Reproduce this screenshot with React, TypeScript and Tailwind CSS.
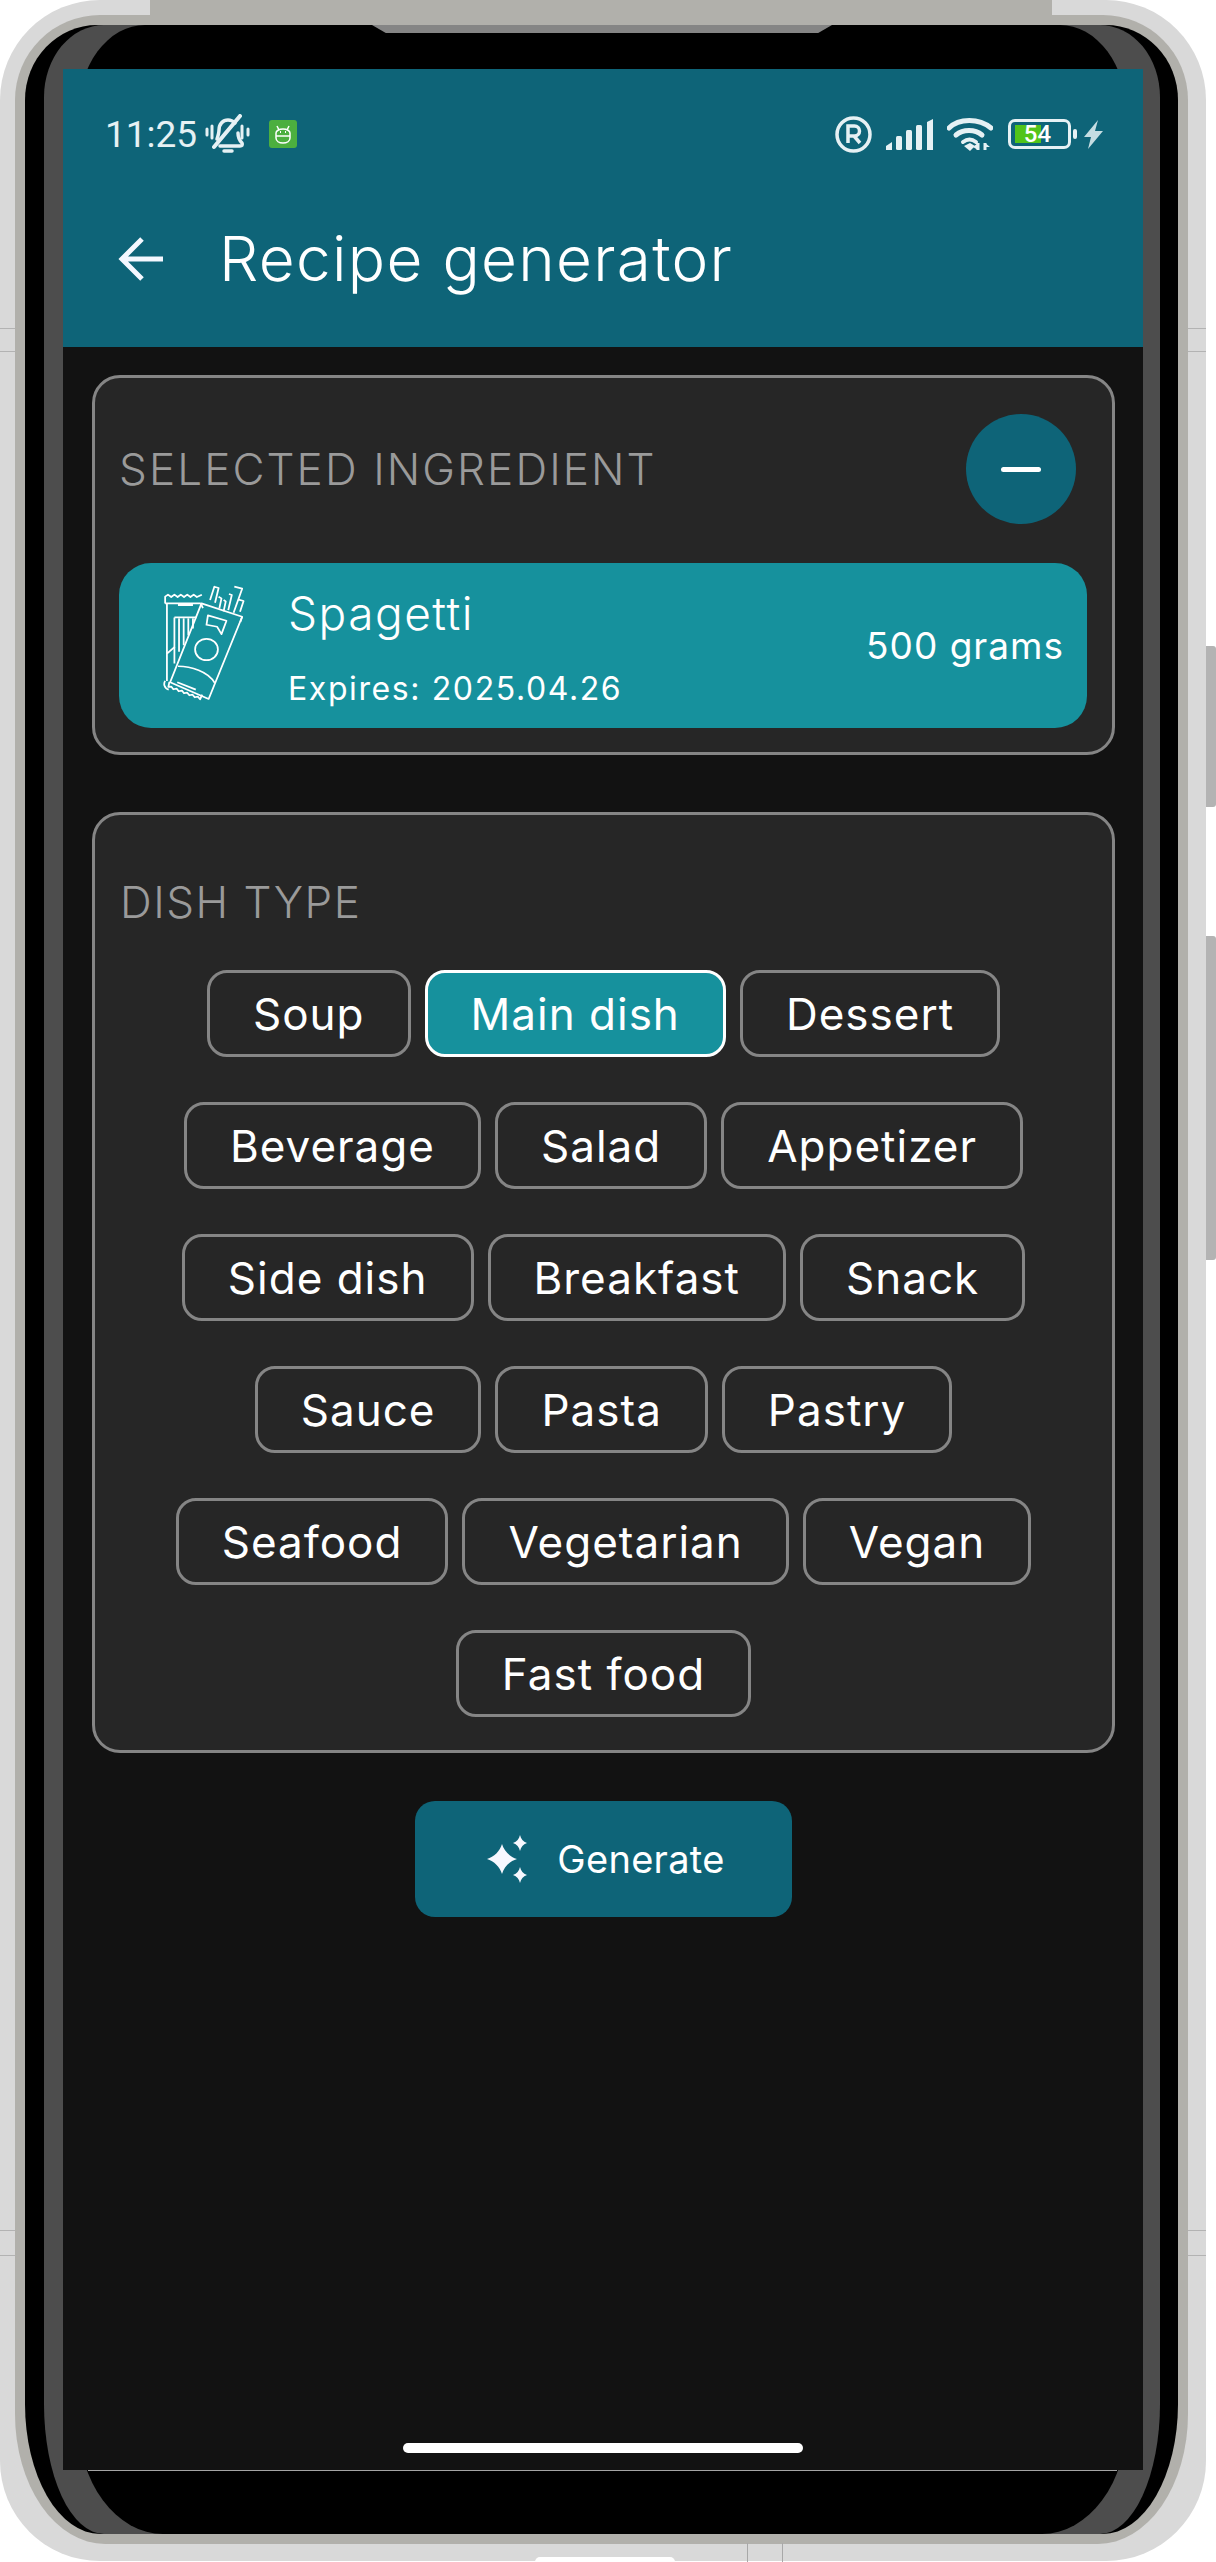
import React from "react";

const dishRows = [
  ["Soup", "Main dish", "Dessert"],
  ["Beverage", "Salad", "Appetizer"],
  ["Side dish", "Breakfast", "Snack"],
  ["Sauce", "Pasta", "Pastry"],
  ["Seafood", "Vegetarian", "Vegan"],
  ["Fast food"],
];

const BellOffIcon = () => (
  <svg width="46" height="40" viewBox="0 0 46 40" fill="none" stroke="#e6f1f4" strokeWidth="3.500" strokeLinecap="round" strokeLinejoin="round">
    <path d="M2 15v6M7 12v12M37 12v12M43 15v6" strokeWidth="3" />
    <path d="M9 33 35 2" strokeWidth="4" />
    <path d="M12 25c1-3 2-6 2-9 0-6 4-10 9-10 3 0 5 1 7 3" />
    <path d="M33 19c0 4 2 8 4 10 1 2 0 3-2 3H15" />
    <path d="M19 37h8" />
  </svg>
);

const AndroidBadge = () => (
  <div className="flex h-[28px] w-[28px] items-center justify-center rounded-[3px] bg-[#4caf3f]">
    <svg width="18" height="20" viewBox="0 0 18 20" fill="none" stroke="#ffffff" strokeWidth="1.500">
      <path d="M3 2l2 4M15 2l-2 4" />
      <path d="M2 9c0-2 3-4 7-4s7 2 7 4v5c0 3-3 5-7 5s-7-2-7-5z" />
      <path d="M2 12h14" />
      <path d="M6 8h1M11 8h1" strokeWidth="2" />
    </svg>
  </div>
);

const StatusRight = () => (
  <div className="flex items-center">
    <svg width="37" height="37" viewBox="0 0 37 37" fill="none" stroke="#e6f1f4">
      <circle cx="18.500" cy="18.500" r="16.500" strokeWidth="3.500" />
      <path d="M13 27V10h6.500a5 5 0 0 1 0 10H13M19 20l6 7" strokeWidth="3.500" />
    </svg>
    <svg className="ml-[14px]" width="48" height="31" viewBox="0 0 48 31" fill="#e6f1f4">
      <path d="M0 31v-4l6-4v8z" />
      <rect x="10" y="17" width="6" height="14" rx="1.500" />
      <rect x="20" y="11" width="6" height="20" rx="1.500" />
      <rect x="30" y="6" width="6" height="25" rx="1.500" />
      <path d="M41 3l6-3v31h-6z" />
    </svg>
    <svg className="ml-[13px]" width="46" height="33" viewBox="0 0 46 33" fill="none" stroke="#e6f1f4" strokeLinecap="round">
      <path d="M2 10C12 0 32 0 44 10" strokeWidth="5" />
      <path d="M9 17c7-6 19-6 26 0" strokeWidth="5" />
      <path d="M16 24c4-3 9-3 13 0" strokeWidth="4" />
      <path d="M17 28l6-3 5 3-5 5z" fill="#e6f1f4" stroke="none" />
      <path d="M31 25v7M38 25v7" strokeWidth="3" strokeLinecap="butt" />
      <path d="M31 25l-5 4 5 3zM38 25l5 4h-5z" fill="#e6f1f4" stroke="none" />
    </svg>
    <div className="relative ml-[15px] h-[30px] w-[63px] rounded-[7px] border-[3px] border-[#e6f1f4]">
      <div className="absolute top-[3px] left-[4px] h-[18px] w-[26px] bg-[#52c41a]" />
      <div className="absolute inset-0 flex items-center justify-center pr-[4px] text-[24px] leading-none font-medium text-white [font-family:Roboto,sans-serif]">
        54
      </div>
    </div>
    <div className="ml-[2px] h-[10px] w-[4px] rounded-[2px] bg-[#e6f1f4]" />
    <svg className="ml-[7px]" width="19" height="29" viewBox="0 0 19 29" fill="#c5dde2">
      <path d="M14 0 0 17h7L4 29 19 11h-8z" />
    </svg>
  </div>
);

const PastaIcon = () => (
  <svg className="shrink-0" width="82" height="122" viewBox="230 645 230 365" preserveAspectRatio="none" fill="none" stroke="#ffffff" strokeWidth="5" strokeLinejoin="round">
    <path d="M236 700v-20l8-6 9 7 9-7 9 7 9-7 9 7 9-7 9 7 9-7 9 7 14-7" />
    <path d="M236 700h100M272 705h42" />
    <path d="M241 700v232M236 932c-5 8-3 22 10 26" />
    <path d="M262 742h62M262 742v138M275 745v100M288 745v80M301 745v50M314 745v30" />
    <path d="M241 850l22-20" />
    <path d="M338 700l114 40-94 246-108-50z" />
    <path d="M336 700l6 14M452 740l-5 16" />
    <path d="M248 935l-3 15 8-1 6 8 9-2 6 8 9-2 6 8 9-2 6 8 9-2 6 8 9-2 6 8 6-14" />
    <path d="M362 690l12-40 12 4-10 44M386 680l8 5-6 30M400 690l6 4-6 30M415 672l8 3-10 45M430 650l22 6-24 72M440 688l16 5-10 32" />
    <path d="M356 736l52 16-14 40-12-22-30-6z" />
    <circle cx="352" cy="838" r="32" />
    <path d="M272 888c35 0 85 15 103 50" />
    <path d="M270 936l52 22" />
  </svg>
);

const SparkleIcon = () => (
  <svg className="shrink-0" width="40" height="48" viewBox="0 0 40 48" fill="#f7f8ff">
    <path d="M15 9c2 7 8 13 15 15-7 2-13 8-15 15-2-7-8-13-15-15 7-2 13-8 15-15z" />
    <path d="M33 0c1 4 3 6.500 7 8-4 1.500-6 4-7 8-1-4-3-6.500-7-8 4-1.500 6-4 7-8z" />
    <path d="M33 32c1 4 3 6.500 7 8-4 1.500-6 4-7 8-1-4-3-6.500-7-8 4-1.500 6-4 7-8z" />
  </svg>
);

const App: React.FC = () => {
  return (
    <div className="relative h-[2562px] w-[1216px] overflow-hidden bg-white [font-family:Inter,sans-serif]">
      {/* side buttons */}
      <div className="absolute top-[646px] right-0 h-[161px] w-[12px] rounded-r-[3px] bg-[#b3b3b3]" />
      <div className="absolute top-[936px] right-0 h-[324px] w-[12px] rounded-r-[3px] bg-[#b3b3b3]" />

      <div className="relative h-[2561px] w-[1206px] rounded-[100px] bg-[#d9d9d9] pt-[15px] pr-[18px] pb-[17px] pl-[15px]">
        <div className="h-full rounded-[85px_85px_90px_90px/85px_85px_130px_130px] bg-[#b1b0ab] p-[10px]">
          <div className="h-full rounded-[72px_72px_75px_75px/75px_75px_130px_130px] bg-black pr-[18px] pl-[19px]">
            <div className="h-full rounded-[60px_60px_60px_60px/72px_72px_130px_130px] bg-[#4d4d4d] pr-[33px] pl-[34px]">
              <div className="h-full rounded-[67px_67px_85px_85px/90px_90px_115px_115px] bg-black pt-[44px]">
                <div className="-mr-[16px] -ml-[15px] flex h-[2401px] flex-col bg-[#121212]">
                  <header className="h-[278px] shrink-0 bg-[#0e6478]">
                    <div className="flex h-[40px] translate-y-[45px] items-center justify-between pr-[40px] pl-[42px]">
                      <div className="flex items-center">
                        <span className="text-[37px] leading-none text-[#e6f1f4] [font-family:Roboto,sans-serif]">11:25</span>
                        <span className="ml-[8px]">
                          <BellOffIcon />
                        </span>
                        <span className="ml-[18px]">
                          <AndroidBadge />
                        </span>
                      </div>
                      <StatusRight />
                    </div>
                    <div className="flex h-[60px] translate-y-[120px] items-center pl-[55px]">
                      <svg width="46" height="46" viewBox="0 0 46 46" fill="none" stroke="#f4f8ff" strokeWidth="5">
                        <path d="M45 23H5M24 3 4 23l20 20" />
                      </svg>
                      <h1 className="ml-[55px] text-[62px] leading-none font-light tracking-[1.3px] text-white">Recipe generator</h1>
                    </div>
                  </header>

                  <main className="flex flex-1 flex-col pt-[28px] pr-[28px] pl-[29px]">
                    <section className="h-[380px] rounded-[28px] border-[3px] border-[#858585] bg-[#262626] pt-[36px] pr-[25px] pb-[24px] pl-[24px]">
                      <div className="flex h-[110px] items-center justify-between">
                        <span className="text-[44px] font-light tracking-[2.1px] text-[#9a9a9a]">SELECTED INGREDIENT</span>
                        <button className="mr-[11px] flex h-[110px] w-[110px] items-center justify-center rounded-full bg-[#0e6478]">
                          <span className="h-[5px] w-[40px] rounded-full bg-white" />
                        </button>
                      </div>
                      <div className="mt-[39px] flex h-[165px] items-center rounded-[32px] bg-[#16919d] pr-[23px] pl-[44px] text-white">
                        <PastaIcon />
                        <div className="ml-[43px] flex flex-1 flex-col">
                          <span className="text-[46px] leading-[50px] font-light tracking-[1.500px]">Spagetti</span>
                          <span className="mt-[26px] translate-y-[5px] text-[32px] leading-[40px] tracking-[1.600px]">Expires: 2025.04.26</span>
                        </div>
                        <span className="text-[37px] leading-none tracking-[1px]">500 grams</span>
                      </div>
                    </section>

                    <section className="mt-[57px] h-[941px] rounded-[28px] border-[3px] border-[#858585] bg-[#262626] pt-[62px] pb-[33px]">
                      <div className="pl-[25px] text-[44px] leading-[50px] font-light tracking-[1.500px] text-[#9a9a9a]">DISH TYPE</div>
                      <div className="mt-[43px] flex flex-col gap-[45px]">
                        {dishRows.map((row) => (
                          <div key={row[0]} className="flex justify-center gap-[14px]">
                            {row.map((dish) =>
                              dish === "Main dish" ? (
                                <button key={dish} className="h-[87px] rounded-[20px] border-[3px] border-white bg-[#16919d] px-[43px] text-[44px] leading-none tracking-[1px] text-white">
                                  {dish}
                                </button>
                              ) : (
                                <button key={dish} className="h-[87px] rounded-[20px] border-[3px] border-[#858585] px-[43px] text-[44px] leading-none tracking-[1px] text-white">
                                  {dish}
                                </button>
                              ),
                            )}
                          </div>
                        ))}
                      </div>
                    </section>

                    <button className="mt-[48px] flex h-[116px] w-[377px] items-center justify-center self-center rounded-[20px] bg-[#0e6478] pl-[5px] text-white">
                      <SparkleIcon />
                      <span className="ml-[30px] text-[38px] leading-none tracking-[0.3px]">Generate</span>
                    </button>
                  </main>

                  <div className="flex justify-center pb-[17px]">
                    <div className="h-[10px] w-[400px] rounded-full bg-white" />
                  </div>
                </div>
                <div className="mx-[10px] h-px bg-[#a5a5a5]" />
              </div>
            </div>
          </div>
        </div>
      </div>

      {/* frame top strip and sensor notch */}
      <div className="absolute top-0 left-[150px] h-[25px] w-[902px] bg-[#b1b0ab]" />
      <div className="absolute top-[25px] left-[372px] h-[8px] w-[460px] bg-[#858585] [clip-path:polygon(0_0,100%_0,97%_100%,3%_100%)]" />

      {/* frame seam lines */}
      <div className="absolute top-[328px] left-0 h-px w-[15px] bg-[#b3b3b3]" />
      <div className="absolute top-[351px] left-0 h-px w-[15px] bg-[#b3b3b3]" />
      <div className="absolute top-[328px] left-[1188px] h-px w-[18px] bg-[#b3b3b3]" />
      <div className="absolute top-[351px] left-[1188px] h-px w-[18px] bg-[#b3b3b3]" />
      <div className="absolute top-[2230px] left-0 h-px w-[15px] bg-[#b3b3b3]" />
      <div className="absolute top-[2255px] left-0 h-px w-[15px] bg-[#b3b3b3]" />
      <div className="absolute top-[2230px] left-[1188px] h-px w-[18px] bg-[#b3b3b3]" />
      <div className="absolute top-[2255px] left-[1188px] h-px w-[18px] bg-[#b3b3b3]" />
      <div className="absolute top-[2543px] left-[747px] h-[19px] w-px bg-[#a8a8a8]" />
      <div className="absolute top-[2543px] left-[782px] h-[19px] w-px bg-[#a8a8a8]" />
      <div className="absolute top-[2557px] left-[535px] h-[5px] w-[140px] rounded-t-[12px] bg-white" />
    </div>
  );
};

export default App;
